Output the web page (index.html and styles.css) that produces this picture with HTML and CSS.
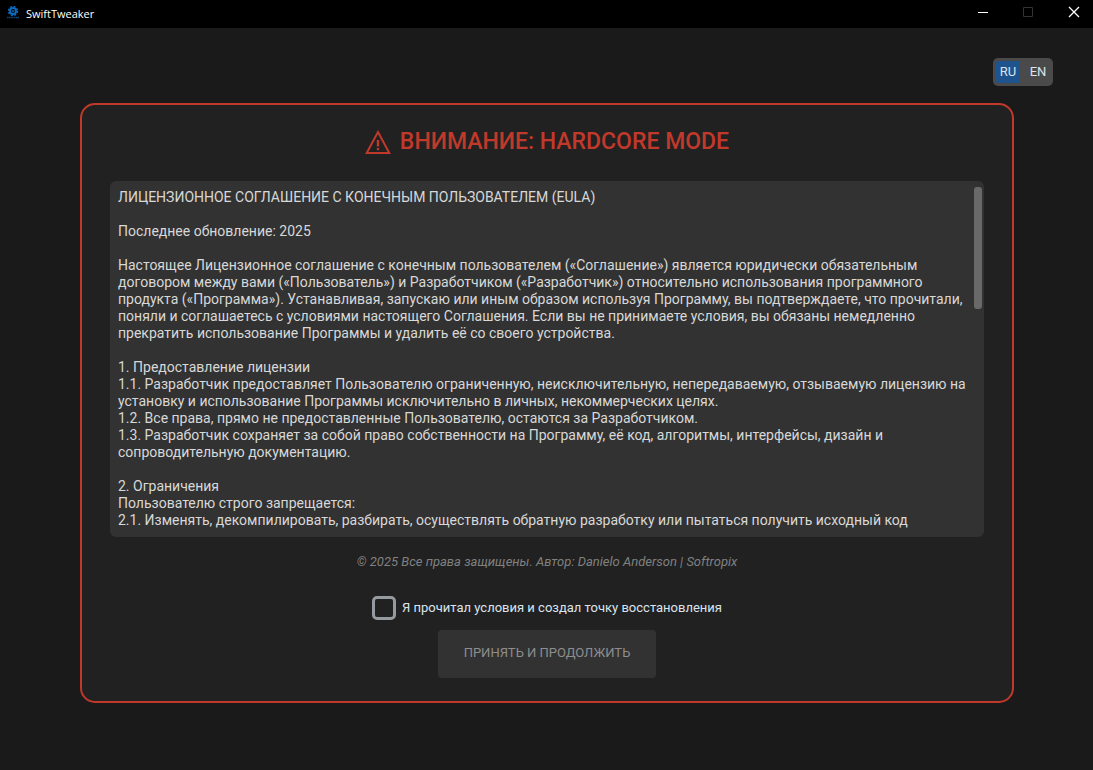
FILE: index.html
```html
<!DOCTYPE html>
<html lang="ru">
<head>
    <meta charset="utf-8">
    <title>SwiftTweaker</title>
    <link rel="stylesheet" href="styles.css">
</head>
<body>
    <header class="titlebar">
        <svg class="logo" viewBox="0 0 14 14" aria-hidden="true">
            <circle cx="7" cy="5" r="3" fill="none" stroke="#0a6cc0" stroke-width="2" />
            <circle cx="7" cy="5" r="4.5" fill="none" stroke="#0a6cc0" stroke-width="1.4" stroke-dasharray="2 1.53" />
            <circle cx="7" cy="5" r="1" fill="#0a6cc0" />
            <path d="M1 11.5h12" stroke="#074478" stroke-width="1.6" stroke-dasharray="1.4 .4" />
        </svg>
        <span class="app-name">SwiftTweaker</span>
        <button class="win-button" type="button" aria-label="Свернуть">
            <svg width="12" height="12" viewBox="0 0 12 12"><path d="M2 6.5h10" stroke="#fff" /></svg>
        </button>
        <button class="win-button" type="button" aria-label="Развернуть" disabled>
            <svg width="12" height="12" viewBox="0 0 12 12"><path d="M1.5 1.5h9v9h-9z" fill="none" stroke="#333" /></svg>
        </button>
        <button class="win-button" type="button" aria-label="Закрыть">
            <svg width="12" height="12" viewBox="0 0 12 12"><path d="M1 1l10 10M11 1L1 11" stroke="#fff" stroke-width="1.3" /></svg>
        </button>
    </header>

    <main class="page">
        <div class="lang">
            <button class="lang-button active" type="button">RU</button>
            <button class="lang-button" type="button">EN</button>
        </div>

        <form class="card">
            <h1 class="title">
                <svg width="26" height="24" viewBox="0 0 26 24" aria-hidden="true">
                    <path d="M13 2L24.3 22.9H1.7z" fill="none" stroke="#c0392b" stroke-width="2" />
                    <path d="M13 10v6.5M13 18v2.2" stroke="#c0392b" stroke-width="2.4" />
                </svg>
                <span>ВНИМАНИЕ: HARDCORE MODE</span>
            </h1>

            <div class="eula">
                <textarea class="eula-text" aria-label="Лицензионное соглашение" readonly>ЛИЦЕНЗИОННОЕ СОГЛАШЕНИЕ С КОНЕЧНЫМ ПОЛЬЗОВАТЕЛЕМ (EULA)

Последнее обновление: 2025

Настоящее Лицензионное соглашение с конечным пользователем («Соглашение») является юридически обязательным договором между вами («Пользователь») и Разработчиком («Разработчик») относительно использования программного продукта («Программа»). Устанавливая, запускаю или иным образом используя Программу, вы подтверждаете, что прочитали, поняли и соглашаетесь с условиями настоящего Соглашения. Если вы не принимаете условия, вы обязаны немедленно прекратить использование Программы и удалить её со своего устройства.

1. Предоставление лицензии
1.1. Разработчик предоставляет Пользователю ограниченную, неисключительную, непередаваемую, отзываемую лицензию на установку и использование Программы исключительно в личных, некоммерческих целях.
1.2. Все права, прямо не предоставленные Пользователю, остаются за Разработчиком.
1.3. Разработчик сохраняет за собой право собственности на Программу, её код, алгоритмы, интерфейсы, дизайн и сопроводительную документацию.

2. Ограничения
Пользователю строго запрещается:
2.1. Изменять, декомпилировать, разбирать, осуществлять обратную разработку или пытаться получить исходный код</textarea>
                <div class="scrollbar"><div class="thumb"></div></div>
            </div>

            <p class="copyright">© 2025 Все права защищены. Автор: Danielo Anderson | Softropix</p>

            <div class="agree">
                <input class="check" type="checkbox" id="agree">
                <label for="agree">Я прочитал условия и создал точку восстановления</label>
            </div>

            <button class="accept" type="submit" disabled>ПРИНЯТЬ И ПРОДОЛЖИТЬ</button>
        </form>
    </main>
</body>
</html>
```
FILE: styles.css
```css
* {
    box-sizing: border-box;
}

body {
    margin: 0;
    min-height: 100vh;
    display: flex;
    flex-direction: column;
    background-color: #1a1a1a;
    color: #dce4ee;
    font-family: Roboto, sans-serif;
    font-size: 13px;
}

button,
textarea {
    font-family: inherit;
    border: none;
    margin: 0;
}

.titlebar {
    display: flex;
    align-items: center;
    height: 28px;
    padding-left: 6px;
    background-color: black;
    color: white;
    font-family: "Open Sans", sans-serif;
    font-size: 11px;
}

.logo {
    width: 14px;
    height: 14px;
    margin-bottom: 2px;
}

.app-name {
    flex: 1;
    padding-left: 6px;
    padding-bottom: 2px;
}

.win-button {
    display: flex;
    align-items: center;
    justify-content: center;
    width: 46px;
    height: 28px;
    padding: 0 0 4px 8px;
    background: none;
}

.page {
    flex: 1;
    display: flex;
    flex-direction: column;
    padding: 30px 79px 67px 80px;
}

.lang {
    align-self: flex-end;
    display: flex;
    gap: 6px;
    height: 28px;
    margin-right: -39px;
    padding: 3px;
    border-radius: 5px;
    background-color: #4a4a4a;
}

.lang-button {
    width: 24px;
    padding: 0 0 2px;
    border-radius: 2px;
    background: none;
    color: #dce4ee;
    font-size: 13px;
}

.lang-button.active {
    background-color: #1f538d;
}

.card {
    flex: 1;
    display: flex;
    flex-direction: column;
    align-items: center;
    margin-top: 17px;
    padding: 23px 28px 23px;
    border: 2px solid #c0392b;
    border-radius: 15px;
    background-color: #212121;
}

.title {
    display: flex;
    align-items: center;
    gap: 9px;
    height: 28px;
    margin: 0 0 25px;
    color: #c0392b;
    font-size: 23px;
    font-weight: 500;
    line-height: 26px;
}

.eula {
    flex: 1;
    align-self: stretch;
    display: flex;
    min-height: 100px;
    padding: 6px 2px 6px 8px;
    border-radius: 6px;
    background-color: #323232;
}

.eula-text {
    flex: 1;
    padding: 2px 0 0;
    outline: none;
    resize: none;
    background: none;
    color: #d8d8d8;
    font-size: 14px;
    line-height: 17px;
    scrollbar-width: none;
}

.scrollbar {
    width: 8px;
    margin-left: 4px;
}

.thumb {
    height: 122px;
    border-radius: 3px;
    background-color: #696969;
}

.copyright {
    margin: 16px 0 26px;
    color: gray;
    font-size: 13px;
    font-style: italic;
    line-height: 17px;
}

.agree {
    display: flex;
    align-items: center;
    gap: 6px;
    height: 24px;
}

.agree label {
    padding-bottom: 2px;
}

.check {
    appearance: none;
    width: 24px;
    height: 24px;
    margin: 0;
    border: 3px solid #949a9f;
    border-radius: 5px;
}

.check:checked {
    background-color: #1f538d;
}

.accept {
    width: 218px;
    height: 48px;
    margin-top: 10px;
    padding: 0 0 3px;
    border-radius: 4px;
    background-color: #323232;
    color: #8e8e8e;
    font-size: 13px;
}
```
